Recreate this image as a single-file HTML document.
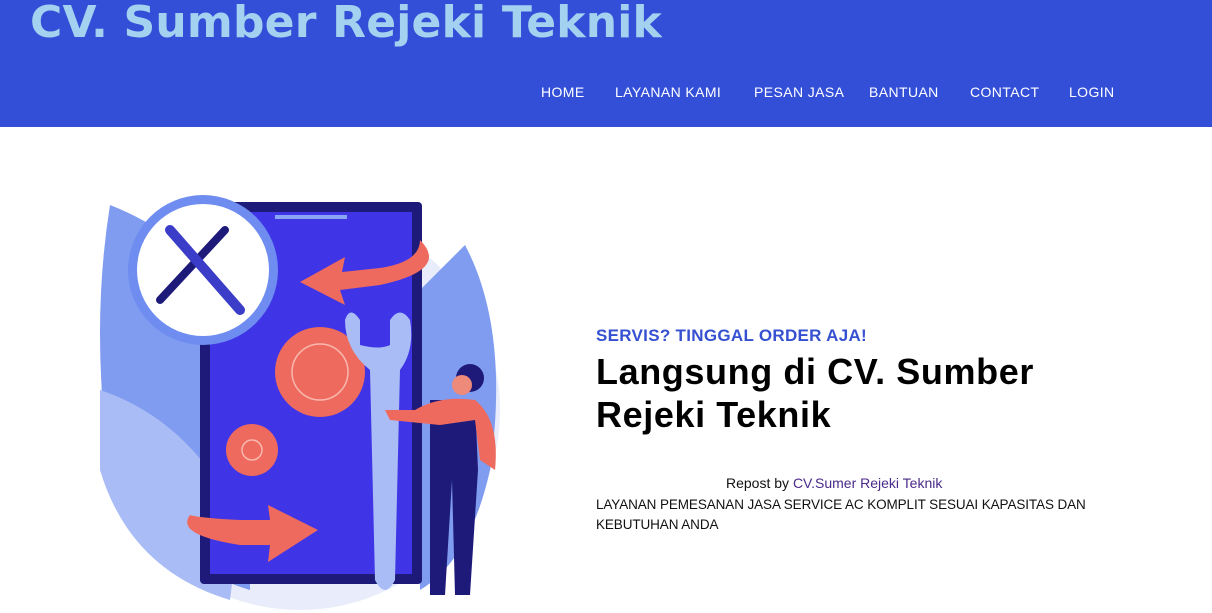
<!DOCTYPE html>
<html><head><meta charset="utf-8"><style>
body{margin:0;width:1212px;height:613px;overflow:hidden;background:#fff;font-family:"Liberation Sans",sans-serif;position:relative}
.hd{position:absolute;left:0;top:0;width:1212px;height:127px;background:#334fd8}
.logo{position:absolute;left:30px;top:-3px;font-size:44px;font-weight:bold;color:#a3d2f0;font-family:"DejaVu Sans",sans-serif;letter-spacing:0.2px}
.nav{position:absolute;top:84px;font-size:14px;color:#fff;letter-spacing:0.4px}
.t{position:absolute;left:596px}
</style></head><body>
<div class="hd">
<div class="logo">CV. Sumber Rejeki Teknik</div>
<span class="nav" style="left:541px">HOME</span>
<span class="nav" style="left:615px">LAYANAN KAMI</span>
<span class="nav" style="left:754px">PESAN JASA</span>
<span class="nav" style="left:869px">BANTUAN</span>
<span class="nav" style="left:970px">CONTACT</span>
<span class="nav" style="left:1069px">LOGIN</span>
</div>
<svg style="position:absolute;left:0;top:0" width="1212" height="613">
<circle cx="300" cy="410" r="200" fill="#e8ecfb"/>
<path d="M110 205 Q200 240 250 330 L250 590 Q150 560 110 470 Q90 330 110 205Z" fill="#7f9cf0"/>
<path d="M100 390 Q190 420 240 520 L230 600 Q130 570 100 470Z" fill="#a9bcf5"/>
<path d="M465 245 Q510 330 490 470 Q470 560 420 590 L420 290Z" fill="#7f9cf0"/>
<rect x="200" y="202" width="222" height="382" rx="4" fill="#1e1a7a"/>
<rect x="210" y="212" width="202" height="362" fill="#3f35e6"/>
<rect x="275" y="215" width="72" height="4" fill="#8aa4f6"/>
<path d="M420 240 Q450 270 380 285 L340 290 L345 305 L300 282 L345 257 L342 272 L380 268 Q420 262 420 240Z" fill="#ee6a5e"/>
<path d="M190 515 Q175 535 240 545 L270 545 L268 562 L318 530 L268 505 L270 520 L240 520 Q200 518 190 515Z" fill="#ee6a5e"/>
<circle cx="320" cy="372" r="45" fill="#ee6a5e"/>
<circle cx="320" cy="372" r="28" fill="none" stroke="#f8b8ae" stroke-width="1.5"/>
<circle cx="252" cy="450" r="26" fill="#ee6a5e"/>
<circle cx="252" cy="450" r="10" fill="none" stroke="#f8b8ae" stroke-width="1.5"/>
<circle cx="203" cy="270" r="75" fill="#6f8cf0"/>
<circle cx="203" cy="270" r="66" fill="#fff"/>
<path d="M160 300 L225 230" stroke="#1e1a7a" stroke-width="8" stroke-linecap="round"/>
<path d="M170 230 L240 310" stroke="#3b3dc8" stroke-width="10" stroke-linecap="round"/>
<path d="M345 320 Q350 305 360 320 L360 345 Q380 350 390 345 L390 320 Q400 305 410 320 Q415 350 400 370 L395 580 Q385 600 375 580 L370 370 Q345 350 345 320Z" fill="#a9bcf5"/>
<path d="M430 400 L475 400 L478 470 L470 595 L455 595 L452 480 L445 595 L430 595Z" fill="#1e1a7a"/>
<path d="M415 410 Q440 395 475 400 Q500 420 495 470 L480 460 L475 420 L440 425 L390 420 L385 410Z" fill="#ee6a5e"/>
<circle cx="470" cy="378" r="14" fill="#1e1a7a"/>
<circle cx="462" cy="385" r="10" fill="#ee8a7a"/>
</svg>
<div class="t" style="top:326px;font-size:17px;font-weight:bold;color:#3550d0;letter-spacing:0.3px">SERVIS? TINGGAL ORDER AJA!</div>
<div class="t" style="top:350px;font-size:36px;font-weight:bold;color:#000;line-height:43px;width:470px;letter-spacing:0.6px">Langsung di CV. Sumber Rejeki Teknik</div>
<div style="position:absolute;left:726px;top:475px;font-size:14px;color:#111">Repost by <span style="color:#4a2a8a">CV.Sumer Rejeki Teknik</span></div>
<div class="t" style="top:495px;font-size:13.5px;color:#111;line-height:20px;width:500px;letter-spacing:-0.1px">LAYANAN PEMESANAN JASA SERVICE AC KOMPLIT SESUAI KAPASITAS DAN KEBUTUHAN ANDA</div>
</body></html>
